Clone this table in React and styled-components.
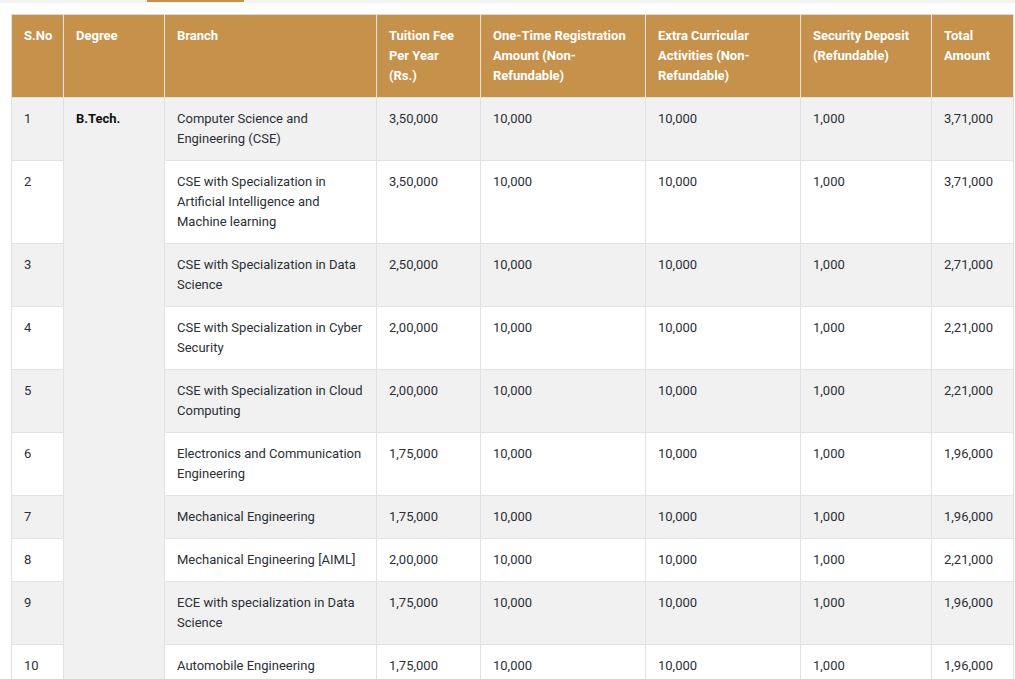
import React from "react";
import styled, { createGlobalStyle } from "styled-components";

const GlobalStyle = createGlobalStyle`
  html, body {
    margin: 0;
    padding: 0;
    background: #ffffff;
    font-family: Roboto, "Liberation Sans", Arial, sans-serif;
  }
`;

const Page = styled.div`
  display: flex;
  flex-direction: column;
  gap: 11px;
`;

const TabStrip = styled.div`
  height: 3px;
  background: #f3f3f3;
  box-shadow: 0 3px 8px rgba(0, 0, 0, 0.035);
  display: flex;
  align-items: flex-start;
  padding-left: 147px;
`;

const TabMark = styled.div`
  width: 97px;
  height: 2px;
  background: #c6914a;
`;

const Wrap = styled.div`
  padding: 0 2px 0 11px;
`;

const Table = styled.table`
  width: 1002px;
  border-collapse: collapse;
  table-layout: fixed;
  font-size: 13px;
  line-height: 20px;
  color: #2c2f36;
`;

const Th = styled.th`
  background: #c6914a;
  color: #ffffff;
  font-weight: 700;
  text-align: left;
  vertical-align: top;
  padding: 11px 13px 11px 12px;
  border: 1px solid #e2e2e2;
  border-top-color: #dcdcdc;
`;

const Row = styled.tr`
  background: ${(p) => (p.$odd ? "#f1f1f1" : "#ffffff")};
`;

const Td = styled.td`
  vertical-align: top;
  padding: 11px 11px 11px 12px;
  border: 1px solid #dfe2e6;
`;

const DegreeCell = styled(Td)`
  background: #f1f1f1;
  font-weight: 700;
  color: #111111;
`;

const cols = [52, 101, 212, 104, 165, 155, 131, 82];

const headers = [
  "S.No",
  "Degree",
  "Branch",
  "Tuition Fee Per Year (Rs.)",
  "One-Time Registration Amount (Non-Refundable)",
  "Extra Curricular Activities (Non-Refundable)",
  "Security Deposit (Refundable)",
  "Total Amount",
];

const rows = [
  ["Computer Science and Engineering (CSE)", "3,50,000", "3,71,000"],
  ["CSE with Specialization in Artificial Intelligence and Machine learning", "3,50,000", "3,71,000"],
  ["CSE with Specialization in Data Science", "2,50,000", "2,71,000"],
  ["CSE with Specialization in Cyber Security", "2,00,000", "2,21,000"],
  ["CSE with Specialization in Cloud Computing", "2,00,000", "2,21,000"],
  ["Electronics and Communication Engineering", "1,75,000", "1,96,000"],
  ["Mechanical Engineering", "1,75,000", "1,96,000"],
  ["Mechanical Engineering [AIML]", "2,00,000", "2,21,000"],
  ["ECE with specialization in Data Science", "1,75,000", "1,96,000"],
  ["Automobile Engineering", "1,75,000", "1,96,000"],
];

export default function App() {
  return (
    <Page>
      <GlobalStyle />
      <TabStrip>
        <TabMark />
      </TabStrip>
      <Wrap>
        <Table>
          <colgroup>
            {cols.map((w, i) => (
              <col key={i} style={{ width: w }} />
            ))}
          </colgroup>
          <thead>
            <tr>
              {headers.map((h) => (
                <Th key={h}>{h}</Th>
              ))}
            </tr>
          </thead>
          <tbody>
            {rows.map(([branch, fee, total], i) => (
              <Row key={i} $odd={i % 2 === 0}>
                <Td>{i + 1}</Td>
                {i === 0 && <DegreeCell rowSpan={rows.length}>B.Tech.</DegreeCell>}
                <Td>{branch}</Td>
                <Td>{fee}</Td>
                <Td>10,000</Td>
                <Td>10,000</Td>
                <Td>1,000</Td>
                <Td>{total}</Td>
              </Row>
            ))}
          </tbody>
        </Table>
      </Wrap>
    </Page>
  );
}
